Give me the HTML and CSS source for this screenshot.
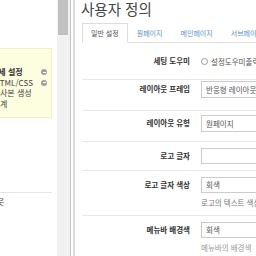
FILE: index.html
```html
<!DOCTYPE html>
<html lang="ko">
<head>
<meta charset="utf-8">
<link rel="stylesheet" href="styles.css">
</head>
<body>
<div class="side">
  <div class="side-content">
    <div class="note">
      <div class="note-line strong"><span class="clip-a">상세 설정</span><span class="dot"></span></div>
      <div class="note-line"><span class="clip-b">HTML/CSS</span><span class="dot"></span></div>
      <div class="note-line"><span>사본 생성</span></div>
      <div class="note-line"><span>계</span></div>
    </div>
    <div class="side-rule"></div>
    <div class="side-text"><span class="clip-c">웃</span></div>
  </div>
  <div class="scrollbar"><div class="thumb"></div></div>
</div>
<div class="splitter"><div class="split-gap"></div><div class="split-line"></div></div>
<div class="main">
  <h1 class="title">사용자 정의</h1>
  <ul class="tabs">
    <li class="tab active">일반 설정</li>
    <li class="tab">원페이지</li>
    <li class="tab">메인페이지</li>
    <li class="tab">서브페이지</li>
  </ul>
  <div class="form">
    <div class="row row-first">
      <div class="label">세팅 도우미</div>
      <div class="control"><span class="radio"></span><span class="radio-text">설정도우미출력</span></div>
    </div>
    <div class="row row-frame">
      <div class="label">레이아웃 프레임</div>
      <div class="control"><div class="input">반응형 레이아웃</div></div>
    </div>
    <div class="row row-type">
      <div class="label">레이아웃 유형</div>
      <div class="control"><div class="input">원페이지</div></div>
    </div>
    <div class="row">
      <div class="label">로고 글자</div>
      <div class="control"><div class="input"></div></div>
    </div>
    <div class="row">
      <div class="label">로고 글자 색상</div>
      <div class="control"><div class="input">회색</div><div class="help help-dark">로고의 텍스트 색상</div></div>
    </div>
    <div class="row">
      <div class="label">메뉴바 배경색</div>
      <div class="control"><div class="input">회색</div><div class="help">메뉴바의 배경색</div></div>
    </div>
  </div>
</div>
</body>
</html>
```

FILE: styles.css
```css
* { box-sizing: border-box; }
html, body { margin: 0; padding: 0; }
body {
  width: 256px;
  height: 256px;
  overflow: hidden;
  display: flex;
  background: #fff;
  font-family: "Noto Sans CJK KR", "Noto Sans", sans-serif;
  color: #333;
}
.side {
  width: 71px;
  flex: none;
  display: flex;
  border-right: 1px solid #c4c4c4;
}
.side-content {
  width: 57px;
  overflow: hidden;
  padding-top: 48px;
}
.note {
  width: 52px;
  height: 70px;
  background: #fdfddf;
  border: 1px solid #f1f0c8;
  border-left: none;
  padding-top: 18px;
}
.note-line {
  display: flex;
  align-items: center;
  justify-content: space-between;
  height: 10.5px;
  font-size: 8px;
  line-height: 10.5px;
  color: #444;
  white-space: nowrap;
  padding-right: 4px;
}
.note-line.strong { font-weight: bold; color: #333; }
.clip-a { margin-left: -9px; }
.clip-b { margin-left: -6px; }
.clip-c { margin-left: -3px; }
.dot {
  width: 6px;
  height: 6px;
  border-radius: 50%;
  background: #a0a0a0;
  position: relative;
  flex: none;
}
.dot::after {
  content: "";
  position: absolute;
  left: 1.5px;
  top: 2.5px;
  width: 3px;
  height: 1px;
  background: #fff;
}
.side-rule {
  margin-top: 74px;
  width: 52px;
  height: 1px;
  background: #e6e6e6;
}
.side-text {
  font-size: 8px;
  line-height: 10px;
  margin-top: 4px;
  color: #555;
  white-space: nowrap;
}
.scrollbar {
  width: 13px;
  flex: none;
  background: #f1f1f1;
  padding-left: 1px;
}
.thumb {
  width: 10px;
  height: 35px;
  background: #c1c1c1;
}
.splitter {
  width: 4px;
  flex: none;
  display: flex;
}
.split-gap { width: 2px; }
.split-line { width: 2px; background: #dcdcdc; }
.main {
  flex: 1;
  min-width: 0;
  padding-left: 7px;
  overflow: hidden;
}
.title {
  margin: 0 0 0 -1px;
  height: 23px;
  padding-top: 1px;
  font-size: 14.5px;
  line-height: 15px;
  font-weight: normal;
  color: #444;
  white-space: nowrap;
}
.tabs {
  list-style: none;
  margin: 0;
  padding: 0;
  display: flex;
  height: 20px;
  border-bottom: 1px solid #dddddd;
  white-space: nowrap;
}
.tab {
  flex: none;
  padding: 0 8px;
  border: 1px solid transparent;
  font-size: 7px;
  line-height: 18px;
  color: #5b95c9;
}
.tab.active {
  border-color: #dddddd;
  border-bottom-color: #fff;
  background: #fff;
  color: #555;
  height: 20px;
}
.row {
  display: grid;
  grid-template-columns: 108px auto;
  column-gap: 11px;
  padding: 6px 0 6px;
  border-bottom: 1px solid #e8e8e8;
  align-items: start;
}
.row-first { padding: 10px 0; }
.row-frame { padding: 1px 0 12px; }
.row-type { padding: 4px 0 9px; }
.label {
  text-align: right;
  font-size: 7.5px;
  font-weight: bold;
  line-height: 16px;
  color: #333;
  white-space: nowrap;
}
.control {
  min-width: 0;
  display: flex;
  flex-direction: column;
  white-space: nowrap;
}
.row-first .control { flex-direction: row; align-items: center; height: 16px; }
.radio {
  width: 7px;
  height: 7px;
  border: 1px solid #999;
  border-radius: 50%;
  margin-right: 3px;
  flex: none;
}
.radio-text { font-size: 7.5px; color: #555; }
.input {
  height: 16px;
  width: 80px;
  border: 1px solid #cccccc;
  padding-left: 4px;
  font-size: 7.5px;
  line-height: 14px;
  color: #555;
}
.row-frame .input, .row-type .input { height: 17px; line-height: 15px; }
.help {
  margin-top: 4px;
  font-size: 7.5px;
  line-height: 12px;
  color: #999;
}
.help-dark { color: #777; }
```
